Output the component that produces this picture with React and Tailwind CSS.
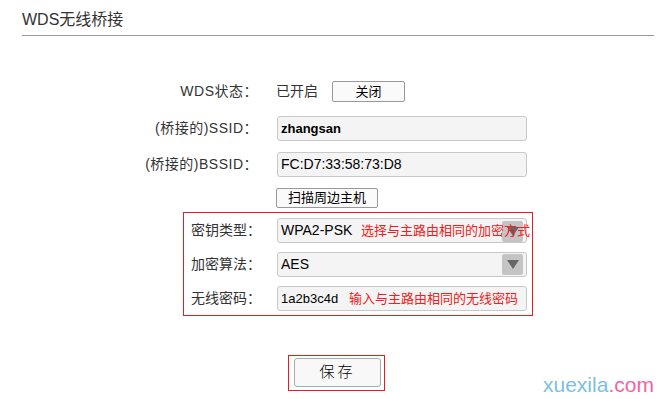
export default function App() {
  const font = { fontFamily: '"Liberation Sans", Arial, "Noto Sans CJK SC", sans-serif' };
  const inputCls =
    "w-[250px] h-[25px] box-border rounded-[3px] bg-[#f4f4f4] border border-[#c8c8c8] px-[3px] text-[14px] text-black flex items-center";

  return (
    <div className="relative w-[664px] h-[399px] bg-white overflow-hidden text-[#333]" style={font}>
      <div className="pl-[22px] pr-[10px] pt-[10px]">
        <div className="text-[16px] leading-[20px] text-[#333] pb-[5px] border-b border-[#999]">WDS无线桥接</div>
      </div>

      <div className="mt-[45px] flex flex-col">
        <div className="flex items-center h-[21px]">
          <div className="w-[258px] text-right text-[14px] tracking-[0.5px]">WDS状态：</div>
          <div className="ml-[18px] text-[14px]">已开启</div>
          <button className="ml-[14px] w-[73px] h-[21px] box-border rounded-[2px] border border-[#999] bg-[#fafafa] text-[13px] text-black">
            关闭
          </button>
        </div>

        <div className="flex items-center mt-[14px]">
          <div className="w-[258px] text-right text-[14px] tracking-[0.5px]">(桥接的)SSID：</div>
          <div className={"ml-[19px] " + inputCls}>
            <span className="font-bold text-[13px]">zhangsan</span>
          </div>
        </div>

        <div className="flex items-center mt-[11px]">
          <div className="w-[258px] text-right text-[14px] tracking-[0.5px]">(桥接的)BSSID：</div>
          <div className={"ml-[19px] " + inputCls}>FC:D7:33:58:73:D8</div>
        </div>

        <div className="flex mt-[11px] pl-[276px]">
          <button className="w-[102px] h-[20px] box-border rounded-[2px] border border-[#999] bg-[#fafafa] text-[13px] leading-[18px] text-black">
            扫描周边主机
          </button>
        </div>

        <div className="ml-[183px] mt-[4px] w-[350px] h-[104px] box-border border border-[#e02020] pl-[7px] pt-[5px] flex flex-col gap-[9px]">
          <div className="flex items-center">
            <div className="w-[86px] text-[14px]">密钥类型：</div>
            <div className={"relative " + inputCls}>
              <span>WPA2-PSK</span>
              <span className="absolute right-[3px] top-[2px] w-[21px] h-[21px] bg-[#c4c4c4] rounded-[2px] flex items-center justify-center">
                <span className="w-0 h-0 border-l-[6px] border-r-[6px] border-t-[9px] border-l-transparent border-r-transparent border-t-[#666]" />
              </span>
              <span className="absolute left-[83px] top-[3px] text-[13px] leading-[17px] text-[#f02020] whitespace-nowrap">
                选择与主路由相同的加密方式
              </span>
            </div>
          </div>
          <div className="flex items-center">
            <div className="w-[86px] text-[14px]">加密算法：</div>
            <div className={"relative " + inputCls}>
              <span>AES</span>
              <span className="absolute right-[3px] top-[1px] w-[21px] h-[21px] bg-[#c4c4c4] rounded-[2px] flex items-center justify-center">
                <span className="w-0 h-0 border-l-[6px] border-r-[6px] border-t-[9px] border-l-transparent border-r-transparent border-t-[#666]" />
              </span>
            </div>
          </div>
          <div className="flex items-center">
            <div className="w-[86px] text-[14px]">无线密码：</div>
            <div className={"relative " + inputCls}>
              <span className="text-[13px]">1a2b3c4d</span>
              <span className="absolute left-[71px] top-[3px] text-[13px] leading-[17px] text-[#f02020] whitespace-nowrap">
                输入与主路由相同的无线密码
              </span>
            </div>
          </div>
        </div>

        <div className="ml-[288px] mt-[39px] w-[97px] h-[36px] box-border border border-[#e02020] px-[5px] pt-[2px]">
          <button className="w-[87px] h-[29px] box-border rounded-[3px] border border-[#aaa] bg-[#f8f8f8] text-[15px] font-light tracking-[3px] text-black">
            保存
          </button>
        </div>
      </div>

      <div className="absolute left-[543px] top-[373px] text-[21px] leading-[24px]">
        <span className="text-[#7cbfe2]">xuexila</span>
        <span className="text-[#f5629f]">.com</span>
      </div>
    </div>
  );
}
